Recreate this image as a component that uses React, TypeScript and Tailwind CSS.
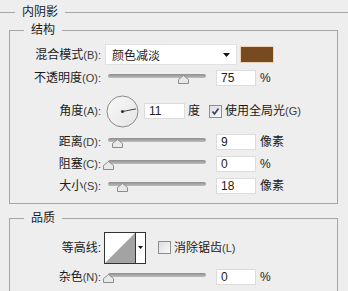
import React from 'react';

const font = "font-['Liberation_Sans','Noto_Sans_CJK_SC',sans-serif]";

const Label: React.FC<{ text: string; hint: string }> = ({ text, hint }) => (
  <div className="w-[91px] shrink-0 text-right text-[12px] leading-none text-[#1a1a1a]">
    <span>{text}</span>
    <span className="text-[11px] text-[#3a3a3a]">({hint}):</span>
  </div>
);

const Thumb: React.FC<{ left: number }> = ({ left }) => (
  <svg className="absolute top-[3px]" style={{ left }} width="11" height="9" viewBox="0 0 11 9">
    <polygon points="5.5,0.5 10.5,4.5 10.5,8.5 0.5,8.5 0.5,4.5" fill="#e9e9e9" stroke="#8c8c8c" />
  </svg>
);

const Slider: React.FC<{ thumb: number }> = ({ thumb }) => (
  <div className="relative ml-[4px] h-[12px] w-[104px] shrink-0">
    <div className="absolute left-[3px] top-[2px] h-[4px] w-[98px] rounded-full bg-gradient-to-b from-[#8e8e8e] to-[#bdbdbd]" />
    <Thumb left={thumb} />
  </div>
);

const Field: React.FC<{ value: string; className?: string }> = ({ value, className = '' }) => (
  <div className={`flex h-[16px] shrink-0 items-center border border-[#dcdcdc] bg-white pl-[4px] text-[12px] text-[#222] ${className}`}>
    {value}
  </div>
);

const SliderRow: React.FC<{ text: string; hint: string; thumb: number; value: string; unit: string; className?: string }> = ({
  text,
  hint,
  thumb,
  value,
  unit,
  className = '',
}) => (
  <div className={`flex h-[22px] items-center ${className}`}>
    <Label text={text} hint={hint} />
    <Slider thumb={thumb} />
    <Field value={value} className="ml-[7px] w-[40px]" />
    <span className="ml-[4px] text-[12px] text-[#1a1a1a]">{unit}</span>
  </div>
);

const Checkbox: React.FC<{ checked?: boolean }> = ({ checked }) => (
  <div className="flex h-[13px] w-[13px] shrink-0 items-center justify-center border border-[#8e8e8e] bg-gradient-to-br from-[#dcdcdc] to-[#fafafa]">
    {checked && (
      <svg width="9" height="9" viewBox="0 0 9 9">
        <path d="M1.5 4.5 L3.5 7 L7.5 1.5" fill="none" stroke="#2f3c6e" strokeWidth="1.6" />
      </svg>
    )}
  </div>
);

export default function App() {
  return (
    <div className={`h-[291px] w-[348px] overflow-hidden bg-[#eeeeee] ${font}`}>
      <fieldset className="-ml-[6px] mt-[4px] w-[370px] border border-[#a6a6a6]">
        <legend className="ml-[20px] px-[7px] text-[12px] leading-[16px] text-[#1a1a1a]">内阴影</legend>

        <fieldset className="ml-[14px] mt-[2px] w-[329px] border border-[#a6a6a6] pb-[6px] pt-[6px]">
          <legend className="ml-[14px] px-[7px] text-[12px] leading-[16px] text-[#1a1a1a]">结构</legend>

          <div className="flex h-[21px] items-center">
            <Label text="混合模式" hint="B" />
            <div className="ml-[4px] flex h-[21px] w-[132px] shrink-0 items-center justify-between border border-[#e2e2e2] bg-white pl-[6px] pr-[6px]">
              <span className="pt-[2px] text-[12px] text-[#1a1a1a]">颜色减淡</span>
              <svg width="7" height="4" viewBox="0 0 7 4">
                <polygon points="0,0 7,0 3.5,4" fill="#111" />
              </svg>
            </div>
            <div className="ml-[3px] h-[17px] w-[34px] shrink-0 border border-[#ecd3b8] bg-[#774a1f]" />
          </div>

          <SliderRow text="不透明度" hint="O" thumb={73} value="75" unit="%" className="mt-[2px]" />

          <div className="mt-[5px] flex h-[34px] items-center">
            <Label text="角度" hint="A" />
            <svg className="ml-[5px] shrink-0" width="33" height="33" viewBox="0 0 33 33">
              <defs>
                <linearGradient id="dial" x1="0" y1="0" x2="1" y2="1">
                  <stop offset="0" stopColor="#f9f9f9" />
                  <stop offset="1" stopColor="#e4e4e4" />
                </linearGradient>
              </defs>
              <circle cx="16.5" cy="16.5" r="15.5" fill="url(#dial)" stroke="#8a8a8a" />
              <line x1="16.5" y1="16.5" x2="30" y2="13.9" stroke="#444" strokeWidth="1" />
              <circle cx="16.5" cy="16.5" r="1.6" fill="#333" />
            </svg>
            <Field value="11" className="ml-[5px] w-[41px]" />
            <span className="ml-[3px] text-[12px] text-[#1a1a1a]">度</span>
            <div className="ml-[9px]">
              <Checkbox checked />
            </div>
            <span className="ml-[3px] text-[12px] text-[#1a1a1a]">
              使用全局光<span className="text-[11px] text-[#3a3a3a]">(G)</span>
            </span>
          </div>

          <SliderRow text="距离" hint="D" thumb={7} value="9" unit="像素" className="mt-[3px]" />
          <SliderRow text="阻塞" hint="C" thumb={-2} value="0" unit="%" />
          <SliderRow text="大小" hint="S" thumb={12} value="18" unit="像素" />
        </fieldset>

        <fieldset className="ml-[14px] mt-[6px] w-[329px] border border-[#a6a6a6] pt-[5px] pb-[20px]">
          <legend className="ml-[14px] px-[7px] text-[12px] leading-[16px] text-[#1a1a1a]">品质</legend>

          <div className="flex h-[33px] items-center">
            <div className="w-[91px] shrink-0 text-right text-[12px] text-[#1a1a1a]">等高线:</div>
            <div className="ml-[3px] flex h-[32px] w-[42px] shrink-0 border border-[#333] bg-white">
              <svg width="30" height="30" viewBox="0 0 30 30" className="shrink-0">
                <polygon points="0,30 30,0 30,30" fill="#a3a3a3" />
              </svg>
              <div className="flex flex-1 items-center justify-center border-l border-[#333]">
                <svg width="5" height="3" viewBox="0 0 5 3">
                  <polygon points="0,0 5,0 2.5,3" fill="#111" />
                </svg>
              </div>
            </div>
            <div className="ml-[12px]">
              <Checkbox />
            </div>
            <span className="ml-[3px] text-[12px] text-[#1a1a1a]">
              消除锯齿<span className="text-[11px] text-[#3a3a3a]">(L)</span>
            </span>
          </div>

          <SliderRow text="杂色" hint="N" thumb={-2} value="0" unit="%" className="mt-[2px]" />
        </fieldset>
      </fieldset>
    </div>
  );
}
